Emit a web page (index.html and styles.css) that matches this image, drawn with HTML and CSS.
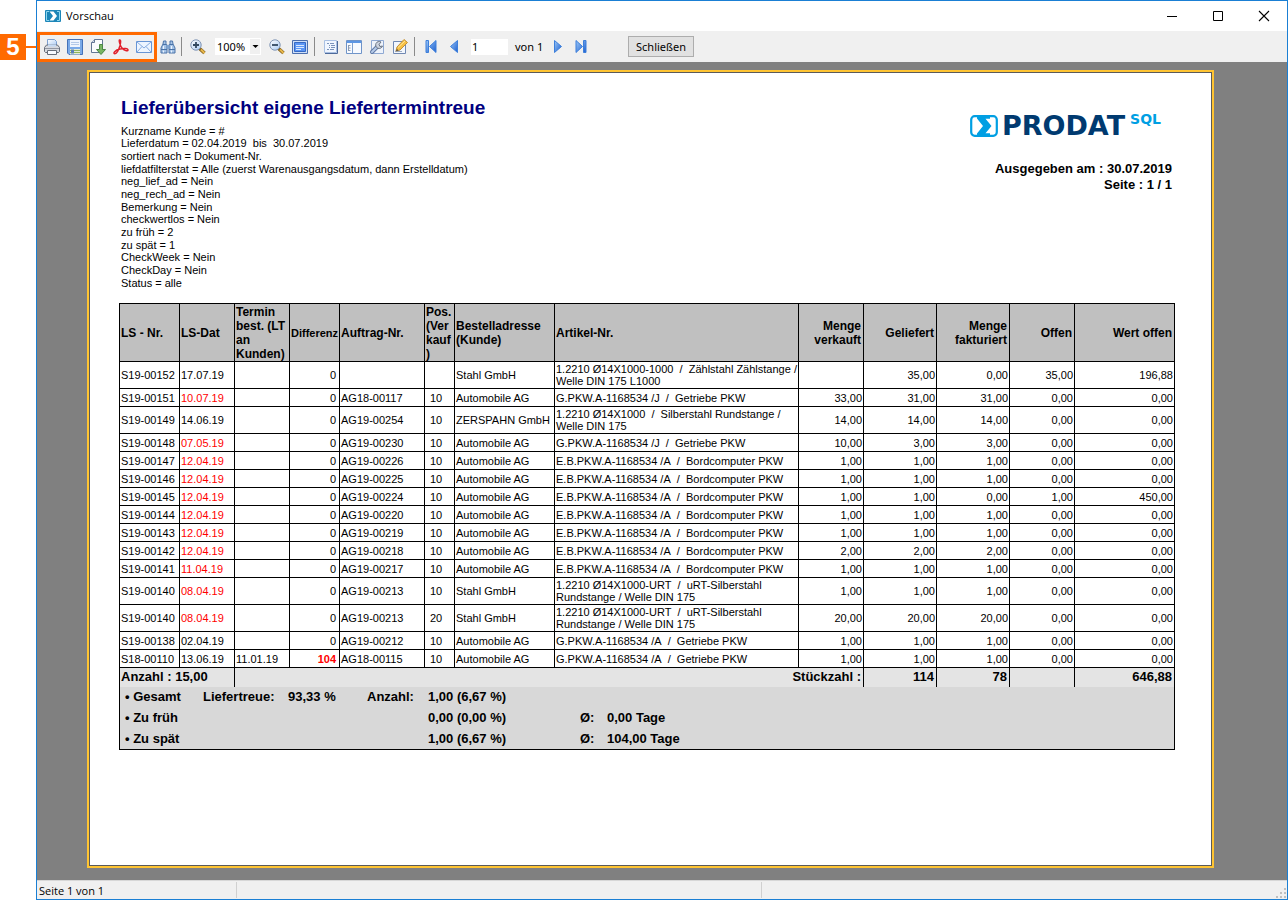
FILE: index.html
```html
<!DOCTYPE html>
<html lang="de">
<head>
<meta charset="utf-8">
<title>Vorschau</title>
<link rel="stylesheet" href="styles.css">
</head>
<body>
<aside class="callout"><span class="callout-number">5</span><span class="callout-line"></span></aside>
<div class="window">
  <header class="titlebar">
    <svg class="app-icon" width="16" height="12" viewBox="0 0 16 12"><rect width="16" height="12" rx="1" fill="#1c86b8"/><path d="M4 1.500H1.500v9H4M12 1.500h2.500v9H12" fill="none" stroke="#8fd6f0"/><path d="M4.500 1.500h4L12 6l-3.500 4.500h-4L8 6z" fill="#fff"/></svg>
    <span class="window-title">Vorschau</span>
    <button class="window-button" aria-label="Minimieren"><svg width="12" height="12" viewBox="0 0 12 12"><path d="M1 6.500h10" stroke="#000"/></svg></button>
    <button class="window-button" aria-label="Maximieren"><svg width="12" height="12" viewBox="0 0 12 12"><path d="M1.500 1.500h9v9h-9z" fill="none" stroke="#000"/></svg></button>
    <button class="window-button" aria-label="Fenster schließen"><svg width="12" height="12" viewBox="0 0 12 12"><path d="M1 1l10 10M11 1L1 11" stroke="#000" stroke-width="1.100"/></svg></button>
  </header>

  <nav class="toolbar">
    <svg width="0" height="0" class="defs" aria-hidden="true"><defs>
      <linearGradient id="blue" x1="0" y1="0" x2="1" y2="1"><stop offset="0" stop-color="#9cc8f7"/><stop offset="1" stop-color="#1c5fd0"/></linearGradient>
      <linearGradient id="glass" x1="0" y1="0" x2="1" y2="1"><stop offset="0" stop-color="#fff"/><stop offset="1" stop-color="#a9caf2"/></linearGradient>
    </defs></svg>
    <div class="export-group">
      <button class="tool tight" aria-label="Drucken"><svg width="16" height="16" viewBox="0 0 16 16"><path d="M3.500 7V.500h7l2 2V7" fill="url(#glass)" stroke="#7da0d0"/><path d="M2.500 6h11l2 2.500v4l-1 1h-13l-1-1v-4z" fill="#d5d8de" stroke="#666d79"/><path d="M4 5.500h8v2H4z" fill="#c4daf5"/><path d="M1 9.500h14" stroke="#9197a3"/><path d="M3.500 11.500h9v4h-9z" fill="#f7faff" stroke="#666d79"/></svg></button>
      <button class="tool tight" aria-label="Speichern"><svg width="16" height="16" viewBox="0 0 16 16"><path d="M.500.500h15v15H2l-1.500-1.500z" fill="#7aaae8" stroke="#4572b8"/><path d="M3 1h10v7H3z" fill="#eef4fd"/><path d="M4 3.500h8M4 5.500h8" stroke="#b3c9e8"/><path d="M3 10h10v5.500H3z" fill="#e3ecd6"/><path d="M3 11.500h10M3 13.500h10" stroke="#8fb65a"/><path d="M4 10.500h3v4H4z" fill="#5a7fb8"/></svg></button>
      <button class="tool tight" aria-label="Exportieren"><svg width="16" height="16" viewBox="0 0 16 16"><path d="M4.500.500h8v13h-11v-10z" fill="#fbfcfe" stroke="#637694"/><path d="M1.500 3.500h3v-3" fill="#d6e0ef" stroke="#637694"/><path d="M9.500 5.500h3v5h3L11 15.500 6.500 10.500h3z" fill="#79b562" stroke="#4b8746"/></svg></button>
      <button class="tool tight" aria-label="Als PDF"><svg width="16" height="16" viewBox="0 0 16 16"><path d="M6.500 1c1.800-.500 1 3.500.500 5.500-1 3.500-3.200 8-5.200 8.300C-.500 14.500 2 11 7 10c4-.900 8-.800 8 1s-4 .600-6-2C7.500 7.500 5.500 1.500 6.500 1z" fill="none" stroke="#e0202b" stroke-width="1.500"/></svg></button>
      <button class="tool tight" aria-label="Als E-Mail"><svg width="16" height="12" viewBox="0 0 16 12"><path d="M.500.500h15v11H.500z" fill="#edf5ff" stroke="#6795d5"/><path d="M1 1l7 6 7-6M1 11l5-5.500M15 11l-5-5.500" fill="none" stroke="#85abe0"/></svg></button>
    </div>
    <button class="tool find" aria-label="Suchen"><svg width="16" height="14" viewBox="0 0 16 14"><path d="M3.500 1h2.500v2.500l1 1.500v8H1V8l2-4zM12.500 1H10v2.500L9 5v8h6V8l-2-4z" fill="#a5c3e6" stroke="#4a73a8"/><path d="M7 5h2v4H7z" fill="#7fa4d0"/><path d="M3 4.500h3M10 4.500h3M1 9.500h6M9 9.500h6" stroke="#4a73a8"/><path d="M3.500 6v3M11.500 6v3M3.500 10.500v2M11.500 10.500v2" stroke="#edf5ff"/></svg></button>
    <span class="separator"></span>
    <button class="tool" aria-label="Vergrößern"><svg width="16" height="16" viewBox="0 0 16 16"><path d="M9.500 9.500l5 4.500" stroke="#84621f" stroke-width="3.500"/><path d="M11 10.500l3.500 3.500" stroke="#e9b84a" stroke-width="2"/><circle cx="6" cy="6" r="5.200" fill="url(#glass)" stroke="#8196b5"/><path d="M3 6h6M6 3v6" stroke="#32485f" stroke-width="1.800"/></svg></button>
    <span class="zoom">
      <select class="zoom-select" aria-label="Zoom"><option>100%</option></select>
      <svg class="zoom-arrow" width="11" height="17" viewBox="0 0 11 17"><path d="M0 1h10v15H0z" fill="#f0f0f0"/><path d="M2.500 7h6l-3 3z"/></svg>
    </span>
    <button class="tool" aria-label="Verkleinern"><svg width="16" height="16" viewBox="0 0 16 16"><path d="M9.500 9.500l5 4.500" stroke="#84621f" stroke-width="3.500"/><path d="M11 10.500l3.500 3.500" stroke="#e9b84a" stroke-width="2"/><circle cx="6" cy="6" r="5.200" fill="url(#glass)" stroke="#8196b5"/><path d="M3 6h6" stroke="#32485f" stroke-width="1.800"/></svg></button>
    <button class="tool" aria-label="Ganze Seite"><svg width="16" height="14" viewBox="0 0 16 14"><path d="M.500.500h15v13H.500z" fill="#cfdff7" stroke="#4c6fae"/><path d="M2.500 2.500h11v9h-11z" fill="#5c96f4" stroke="#3569c4"/><path d="M4 5.500h8M4 7.500h8M4 9.500h5" stroke="#d8e8ff"/></svg></button>
    <span class="separator"></span>
    <button class="tool" aria-label="Gliederung"><svg width="14" height="14" viewBox="0 0 14 14"><path d="M.500.500h12v12H.500z" fill="#f0f6ff" stroke="#a9c0e3"/><path d="M13.500 1v12.500H1" fill="none" stroke="#4d6a9b"/><path d="M3 3.500h2M6 3.500h4M5 5.500h1M7 5.500h4M5 7.500h1M7 7.500h4M3 9.500h2M6 9.500h4" stroke="#7b93bb"/></svg></button>
    <button class="tool" aria-label="Miniaturen"><svg width="16" height="14" viewBox="0 0 16 14"><path d="M.500.500h15v13H.500z" fill="#f7faff" stroke="#6f94c9"/><path d="M1 1h14v2H1z" fill="#5c96e4"/><path d="M6.500 3v10.500" stroke="#7ea1d0"/><path d="M2.500 5v6M2.500 5.500h2M2.500 8h2M2.500 10.500h2" stroke="#8d9bb0"/></svg></button>
    <button class="tool" aria-label="Seite einrichten"><svg width="16" height="16" viewBox="0 0 16 16"><path d="M2.500 1.500h12v13h-12z" fill="#eef3fb" stroke="#8fa9d3"/><path d="M3 13l6-6" stroke="#6079a5" stroke-width="4" stroke-linecap="round"/><path d="M3 13l6-6" stroke="#b6cbea" stroke-width="2" stroke-linecap="round"/><path d="M12 3a3.500 3.500 0 1 0 1.500 4l-2.500.500-1-2z" fill="#ccd3df" stroke="#6b7585"/></svg></button>
    <button class="tool" aria-label="Bearbeiten"><svg width="16" height="16" viewBox="0 0 16 16"><path d="M1.500 2.500h12v12h-12z" fill="#f3f7fd" stroke="#7189b3"/><path d="M3 12.500h7" stroke="#9aa9c0"/><path d="M5 8l7-7.500 3.500 3L8 11l-4 1z" fill="#f8c145" stroke="#c08f3a"/><path d="M6 8.500L13 2" stroke="#ffe89a"/><path d="M4 12l1-2 1.500 1.500z" fill="#444"/></svg></button>
    <span class="separator"></span>
    <button class="tool" aria-label="Erste Seite"><svg width="12" height="13" viewBox="0 0 12 13"><path d="M1 .500h2.500v12H1zM11 .500v12L4.500 6.500z" fill="url(#blue)" stroke="#3d7fdb"/></svg></button>
    <button class="tool" aria-label="Vorherige Seite"><svg width="8" height="13" viewBox="0 0 8 13"><path d="M7.500.500v12L.500 6.500z" fill="url(#blue)" stroke="#3d7fdb"/></svg></button>
    <input class="page-number" type="text" value="1" aria-label="Seite">
    <span class="page-total">von 1</span>
    <button class="tool" aria-label="Nächste Seite"><svg width="8" height="13" viewBox="0 0 8 13"><path d="M.500.500v12l7-6z" fill="url(#blue)" stroke="#3d7fdb"/></svg></button>
    <button class="tool" aria-label="Letzte Seite"><svg width="12" height="13" viewBox="0 0 12 13"><path d="M8.500.500H11v12H8.500zM1 .500v12l6.500-6z" fill="url(#blue)" stroke="#3d7fdb"/></svg></button>
    <button class="close-button">Schließen</button>
  </nav>

  <main class="viewport">
    <article class="page">
      <div class="report-head">
        <div class="report-info">
          <h1 class="report-title">Lieferübersicht eigene Liefertermintreue</h1>
          <ul class="filters">
            <li>Kurzname Kunde = #</li>
            <li>Lieferdatum = 02.04.2019&nbsp; bis&nbsp; 30.07.2019</li>
            <li>sortiert nach = Dokument-Nr.</li>
            <li>liefdatfilterstat = Alle (zuerst Warenausgangsdatum, dann Erstelldatum)</li>
            <li>neg_lief_ad = Nein</li>
            <li>neg_rech_ad = Nein</li>
            <li>Bemerkung = Nein</li>
            <li>checkwertlos = Nein</li>
            <li>zu früh = 2</li>
            <li>zu spät = 1</li>
            <li>CheckWeek = Nein</li>
            <li>CheckDay = Nein</li>
            <li>Status = alle</li>
          </ul>
        </div>
        <div class="report-meta">
          <div class="logo">
            <svg class="logo-mark" width="28" height="22" viewBox="0 0 28 22"><rect x="1.200" y="1.200" width="25.600" height="19.600" rx="3.500" fill="#fff" stroke="#009fe3" stroke-width="2.200"/><path d="M7 1h13v2.800h-4.500L21.500 11l-6 7.200H20V21H7v-2.500L13 11 7 3.500z" fill="#009fe3"/></svg>
            <span class="logo-name">PRODAT</span><span class="logo-suffix">SQL</span>
          </div>
          <p class="issued">Ausgegeben am : 30.07.2019</p>
          <p class="issued">Seite : 1 / 1</p>
        </div>
      </div>

      <table class="report">
        <colgroup><col class="w60"><col class="w55"><col class="w55"><col class="w50"><col class="w85"><col class="w30"><col class="w100"><col><col class="w65"><col class="w73"><col class="w73"><col class="w65"><col class="w100"></colgroup>
        <thead><tr><th>LS - Nr.</th><th>LS-Dat</th><th>Termin best. (LT an Kunden)</th><th class="small">Differenz</th><th>Auftrag-Nr.</th><th>Pos. (Ver<wbr>kauf<wbr>)</th><th>Bestelladresse (Kunde)</th><th>Artikel-Nr.</th><th>Menge verkauft</th><th>Geliefert</th><th>Menge fakturiert</th><th>Offen</th><th>Wert offen</th></tr></thead>
        <tbody>
        <tr><td>S19-00152</td><td>17.07.19</td><td></td><td>0</td><td></td><td></td><td>Stahl GmbH</td><td>1.2210 Ø14X1000-1000&nbsp; /&nbsp; Zählstahl Zählstange /<br>Welle DIN 175 L1000</td><td></td><td>35,00</td><td>0,00</td><td>35,00</td><td>196,88</td></tr>
        <tr><td>S19-00151</td><td class="late">10.07.19</td><td></td><td>0</td><td>AG18-00117</td><td>10</td><td>Automobile AG</td><td>G.PKW.A-1168534 /J&nbsp; /&nbsp; Getriebe PKW</td><td>33,00</td><td>31,00</td><td>31,00</td><td>0,00</td><td>0,00</td></tr>
        <tr><td>S19-00149</td><td>14.06.19</td><td></td><td>0</td><td>AG19-00254</td><td>10</td><td>ZERSPAHN GmbH</td><td>1.2210 Ø14X1000&nbsp; /&nbsp; Silberstahl Rundstange /<br>Welle DIN 175</td><td>14,00</td><td>14,00</td><td>14,00</td><td>0,00</td><td>0,00</td></tr>
        <tr><td>S19-00148</td><td class="late">07.05.19</td><td></td><td>0</td><td>AG19-00230</td><td>10</td><td>Automobile AG</td><td>G.PKW.A-1168534 /J&nbsp; /&nbsp; Getriebe PKW</td><td>10,00</td><td>3,00</td><td>3,00</td><td>0,00</td><td>0,00</td></tr>
        <tr><td>S19-00147</td><td class="late">12.04.19</td><td></td><td>0</td><td>AG19-00226</td><td>10</td><td>Automobile AG</td><td>E.B.PKW.A-1168534 /A&nbsp; /&nbsp; Bordcomputer PKW</td><td>1,00</td><td>1,00</td><td>1,00</td><td>0,00</td><td>0,00</td></tr>
        <tr><td>S19-00146</td><td class="late">12.04.19</td><td></td><td>0</td><td>AG19-00225</td><td>10</td><td>Automobile AG</td><td>E.B.PKW.A-1168534 /A&nbsp; /&nbsp; Bordcomputer PKW</td><td>1,00</td><td>1,00</td><td>1,00</td><td>0,00</td><td>0,00</td></tr>
        <tr><td>S19-00145</td><td class="late">12.04.19</td><td></td><td>0</td><td>AG19-00224</td><td>10</td><td>Automobile AG</td><td>E.B.PKW.A-1168534 /A&nbsp; /&nbsp; Bordcomputer PKW</td><td>1,00</td><td>1,00</td><td>0,00</td><td>1,00</td><td>450,00</td></tr>
        <tr><td>S19-00144</td><td class="late">12.04.19</td><td></td><td>0</td><td>AG19-00220</td><td>10</td><td>Automobile AG</td><td>E.B.PKW.A-1168534 /A&nbsp; /&nbsp; Bordcomputer PKW</td><td>1,00</td><td>1,00</td><td>1,00</td><td>0,00</td><td>0,00</td></tr>
        <tr><td>S19-00143</td><td class="late">12.04.19</td><td></td><td>0</td><td>AG19-00219</td><td>10</td><td>Automobile AG</td><td>E.B.PKW.A-1168534 /A&nbsp; /&nbsp; Bordcomputer PKW</td><td>1,00</td><td>1,00</td><td>1,00</td><td>0,00</td><td>0,00</td></tr>
        <tr><td>S19-00142</td><td class="late">12.04.19</td><td></td><td>0</td><td>AG19-00218</td><td>10</td><td>Automobile AG</td><td>E.B.PKW.A-1168534 /A&nbsp; /&nbsp; Bordcomputer PKW</td><td>2,00</td><td>2,00</td><td>2,00</td><td>0,00</td><td>0,00</td></tr>
        <tr><td>S19-00141</td><td class="late">11.04.19</td><td></td><td>0</td><td>AG19-00217</td><td>10</td><td>Automobile AG</td><td>E.B.PKW.A-1168534 /A&nbsp; /&nbsp; Bordcomputer PKW</td><td>1,00</td><td>1,00</td><td>1,00</td><td>0,00</td><td>0,00</td></tr>
        <tr><td>S19-00140</td><td class="late">08.04.19</td><td></td><td>0</td><td>AG19-00213</td><td>10</td><td>Stahl GmbH</td><td>1.2210 Ø14X1000-URT&nbsp; /&nbsp; uRT-Silberstahl<br>Rundstange / Welle DIN 175</td><td>1,00</td><td>1,00</td><td>1,00</td><td>0,00</td><td>0,00</td></tr>
        <tr><td>S19-00140</td><td class="late">08.04.19</td><td></td><td>0</td><td>AG19-00213</td><td>20</td><td>Stahl GmbH</td><td>1.2210 Ø14X1000-URT&nbsp; /&nbsp; uRT-Silberstahl<br>Rundstange / Welle DIN 175</td><td>20,00</td><td>20,00</td><td>20,00</td><td>0,00</td><td>0,00</td></tr>
        <tr><td>S19-00138</td><td>02.04.19</td><td></td><td>0</td><td>AG19-00212</td><td>10</td><td>Automobile AG</td><td>G.PKW.A-1168534 /A&nbsp; /&nbsp; Getriebe PKW</td><td>1,00</td><td>1,00</td><td>1,00</td><td>0,00</td><td>0,00</td></tr>
        <tr><td>S18-00110</td><td>13.06.19</td><td>11.01.19</td><td class="late strong">104</td><td>AG18-00115</td><td>10</td><td>Automobile AG</td><td>G.PKW.A-1168534 /A&nbsp; /&nbsp; Getriebe PKW</td><td>1,00</td><td>1,00</td><td>1,00</td><td>0,00</td><td>0,00</td></tr>
        </tbody>
        <tfoot><tr><td colspan="2" class="count">Anzahl : 15,00</td><td colspan="7">Stückzahl :</td><td>114</td><td>78</td><td></td><td>646,88</td></tr></tfoot>
      </table>
      <section class="summary">
        <div class="summary-row"><span>• Gesamt</span><span>Liefertreue:</span><span>93,33 %</span><span>Anzahl:</span><span>1,00 (6,67 %)</span></div>
        <div class="summary-row"><span class="wide">• Zu früh</span><span>0,00 (0,00 %)</span><span>Ø:</span><span>0,00 Tage</span></div>
        <div class="summary-row"><span class="wide">• Zu spät</span><span>1,00 (6,67 %)</span><span>Ø:</span><span>104,00 Tage</span></div>
      </section>
    </article>
  </main>

  <footer class="statusbar">
    <span class="status-cell page-status">Seite 1 von 1</span><span class="status-cell middle"></span><span class="status-rest"></span>
    <svg class="grip" width="12" height="12" viewBox="0 0 12 12"><path d="M9 1h2v2H9zM9 5h2v2H9zM5 5h2v2H5zM9 9h2v2H9zM5 9h2v2H5zM1 9h2v2H1z" fill="#bfbfbf"/></svg>
  </footer>
</div>
</body>
</html>
```
FILE: styles.css
```css
* { box-sizing: border-box; }
body { margin: 0; min-height: 100vh; display: flex; background: #fff; color: #000; font-family: "Liberation Sans", Arial, sans-serif; }
button { font: inherit; color: inherit; padding: 0; border: 0; background: none; }
svg { display: block; }

.callout { display: flex; flex: none; align-items: center; width: 36px; height: 26px; margin-top: 34px; }
.callout-number { width: 26px; background: #ff6a00; color: #fff; text-align: center; font: bold 24px/26px "Liberation Sans", Arial, sans-serif; }
.callout-line { flex: 1; height: 2px; background: #ff6a00; }

.window { flex: 1; min-width: 0; display: flex; flex-direction: column; border: 1px solid #1a7fd4; }
.titlebar { display: flex; align-items: center; height: 30px; padding-left: 8px; font: 11px/16px "Open Sans", "Noto Sans", sans-serif; }
.window-title { flex: 1; margin-left: 5px; }
.window-button { display: flex; align-items: center; justify-content: center; width: 46px; height: 30px; }

.toolbar { display: flex; align-items: center; height: 31px; background: #f0f0f0; font: 11px/16px "Noto Sans", sans-serif; }
.defs { position: absolute; }
.export-group { display: flex; align-items: center; gap: 7px; height: 30px; padding: 0 2px 0 4px; border: 3px solid #ff6a00; }
.tool { display: flex; align-items: center; justify-content: center; width: 23px; height: 24px; }
.tight { width: 16px; }
.find { width: 21px; }
.separator { width: 1px; height: 19px; margin: 0 4px 0 3px; background: #8a8a8a; }
.zoom { position: relative; margin: 0 4px 0 6px; }
.zoom-select { appearance: none; display: block; width: 46px; height: 17px; padding: 0 0 0 2px; border: 0; border-radius: 0; background: #fff; color: #000; font: 11px/16px "Noto Sans", sans-serif; }
.zoom-arrow { position: absolute; top: 0; right: 0; pointer-events: none; }
.page-number { width: 37px; height: 16px; margin: 0 7px 0 6px; padding: 0 1px; border: 0; background: #fff; font: inherit; }
.page-total { min-width: 31px; }
.close-button { width: 66px; height: 21px; margin-left: 36px; border: 1px solid #adadad; background: #e1e1e1; }

.viewport { flex: 1; display: flex; padding: 8px 73px 12px 50px; background: #808080; }
.page { flex: 1; min-width: 0; padding: 23px 37px 24px 30px; border: 2px solid #ffc432; outline: 1px solid #5a5a5a; outline-offset: -3px; background: #fff; }
.report-head { display: flex; justify-content: space-between; padding: 1px 3px 0 2px; }
.report-title { margin: 0 0 5px; color: #000080; font-size: 19px; line-height: 24px; }
.filters { margin: 0 0 14px; padding: 0; list-style: none; font-size: 11px; line-height: 13px; }
.filters li:nth-child(3n+1) { line-height: 12px; }
.report-meta { padding-top: 15px; text-align: right; }
.logo { display: flex; align-items: center; justify-content: flex-end; height: 30px; margin: 0 11px 20px 0; }
.logo-mark { margin-right: 4px; }
.logo-name { color: #003a70; font: bold 27px/30px "DejaVu Sans", sans-serif; }
.logo-suffix { align-self: flex-start; margin-left: 5px; color: #009fe3; font: bold 14px/16px "DejaVu Sans", sans-serif; }
.issued { margin: 0; font-size: 13px; font-weight: bold; line-height: 16px; }

.report { width: 100%; table-layout: fixed; border-collapse: collapse; font-size: 11px; line-height: 12px; }
.w30 { width: 30px; } .w50 { width: 50px; } .w55 { width: 55px; } .w60 { width: 60px; } .w65 { width: 65px; } .w73 { width: 73px; } .w85 { width: 85px; } .w100 { width: 100px; }
.report th, .report td { border: 1px solid #000; padding: 1px; text-align: left; vertical-align: middle; }
.report thead tr { height: 58px; }
.report th { padding: 0 1px; background: #c0c0c0; font-size: 12px; line-height: 14px; }
.report .small { font-size: 11px; }
.report tbody tr { height: 18px; }
.report tbody td { white-space: nowrap; }
.report th:nth-child(n+9), .report tbody td:nth-child(n+9), .report tbody td:nth-child(4) { text-align: right; }
.report th:nth-child(n+9) { padding-right: 2px; }
.report tbody td:nth-child(4) { padding-right: 3px; }
.report tbody td:nth-child(6) { padding-left: 5px; }
.late { color: #f00; }
.strong { font-weight: bold; }
.report tfoot tr { height: 19px; background: #e4e4e4; }
.report tfoot td { border-bottom: 0; padding: 1px 2px; text-align: right; font-size: 13px; font-weight: bold; line-height: 16px; }
.report tfoot .count { padding-left: 1px; text-align: left; }

.summary { border: 1px solid #000; border-top: 0; background: #d8d8d8; font-size: 13px; font-weight: bold; line-height: 21px; }
.summary-row { display: grid; grid-template-columns: 78px 85px 79px 61px 152px 27px 1fr; padding-left: 5px; }
.summary-row:first-child { line-height: 20px; }
.summary-row .wide { grid-column: span 4; }

.statusbar { display: flex; align-items: center; height: 19px; border-top: 1px solid #d7d7d7; background: #f0f0f0; font: 11px/18px "Open Sans", "Noto Sans", sans-serif; }
.status-cell { height: 16px; border-right: 1px solid #d0d0d0; }
.page-status { width: 200px; padding-left: 2px; }
.middle { width: 525px; }
.status-rest { flex: 1; }
.grip { align-self: flex-end; }
```
